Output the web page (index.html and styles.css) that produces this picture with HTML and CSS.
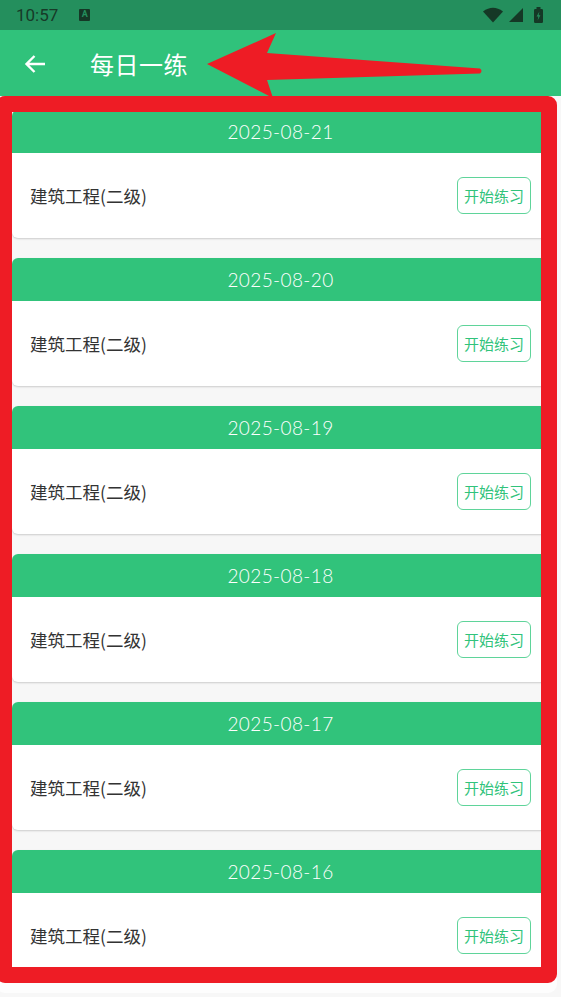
FILE: index.html
```html
<!DOCTYPE html>
<html lang="zh-CN">
<head>
    <meta charset="UTF-8">
    <meta name="viewport" content="width=device-width, initial-scale=1.0">
    <title>每日一练</title>
    <link rel="stylesheet" href="styles.css">
</head>
<body>
    <div class="screen">
        <!-- 状态栏 -->
        <div class="status-bar">
            <span class="time">10:57</span>
            <span class="app-badge">A</span>
            <span class="status-icons">
                <svg width="20" height="16" viewBox="0 0 20 16"><path d="M0 4.5 Q10 -3 20 4.5 L10 15.5 Z" fill="#153826"/></svg>
                <svg width="14" height="14" viewBox="0 0 14 14"><path d="M14 0 L14 14 L0 14 Z" fill="#153826"/></svg>
                <svg width="9" height="16" viewBox="0 0 9 16"><rect x="0" y="2" width="9" height="14" rx="1.2" fill="#153826"/><rect x="2.5" y="0" width="4" height="2.5" fill="#153826"/><path d="M5.4 4.5 L2.6 9.6 L4.4 9.6 L3.6 13.5 L6.4 8.2 L4.6 8.2 Z" fill="#248f5d"/></svg>
            </span>
        </div>

        <!-- 标题栏 -->
        <div class="app-bar">
            <svg class="back" width="22" height="20" viewBox="0 0 22 20"><path d="M21 10 H2.5 M10.5 2 L2.5 10 L10.5 18" fill="none" stroke="#fff" stroke-width="2.4"/></svg>
            <span class="title">每日一练</span>
        </div>

        <!-- 练习列表 -->
        <div class="list" id="list"></div>

        <!-- 标注 -->
        <div class="mark-box"></div>
        <svg class="mark-arrow" width="561" height="110" viewBox="0 0 561 110">
            <path d="M207 64 L276 33 L267 53 L480 68.5 Q483 71 480 73.5 L267 80 L273 98 Z" fill="#ee1c25"/>
        </svg>
    </div>

    <script>
        // 日期列表
        const dates = [
            "2025-08-21", "2025-08-20", "2025-08-19",
            "2025-08-18", "2025-08-17", "2025-08-16",
        ];

        const list = document.getElementById('list');
        dates.forEach(date => {
            list.innerHTML += `
                <div class="card">
                    <div class="card-head">${date}</div>
                    <div class="card-body">
                        <span class="subject">建筑工程(二级)</span>
                        <button class="start">开始练习</button>
                    </div>
                </div>
            `;
        });
    </script>
</body>
</html>
```

FILE: styles.css
```css
body {
    margin: 0;
    background: #f7f7f7;
    font-family: "Noto Sans CJK SC", "Noto Sans", sans-serif;
}
.screen {
    position: relative;
    width: 561px;
    height: 997px;
    overflow: hidden;
    background: #f7f7f7;
}
.status-bar {
    height: 30px;
    background: #248f5d;
    display: flex;
    align-items: center;
    padding: 0 18px 0 16px;
    color: #173a28;
}
.time {
    font-family: Roboto, sans-serif;
    font-size: 17px;
}
.app-badge {
    margin-left: 21px;
    width: 11px;
    height: 12px;
    background: #153826;
    color: #248f5d;
    font-family: Roboto, sans-serif;
    font-size: 9px;
    font-weight: bold;
    line-height: 11px;
    text-align: center;
    border-radius: 1px;
}
.status-icons {
    margin-left: auto;
    display: flex;
    align-items: center;
    gap: 6px;
}
.status-icons svg:last-child {
    margin-left: 5px;
}
.app-bar {
    height: 66px;
    background: #30c27b;
    display: flex;
    align-items: center;
    padding-left: 24px;
    color: #fff;
}
.back {
    margin-top: 2px;
}
.title {
    margin-left: 44px;
    font-size: 24px;
    letter-spacing: 0.5px;
}
.list {
    padding: 14px 12px 0;
}
.card {
    background: #fff;
    border-radius: 6px;
    margin-bottom: 20px;
    box-shadow: 0 1px 2px rgba(0, 0, 0, 0.18);
    overflow: hidden;
}
.card-head {
    height: 43px;
    background: #31c37b;
    color: #fff;
    font-family: Lato, "Noto Sans", sans-serif;
    font-weight: 300;
    font-size: 19px;
    letter-spacing: 0.4px;
    display: flex;
    align-items: center;
    justify-content: center;
}
.card-body {
    height: 85px;
    display: flex;
    align-items: center;
    justify-content: space-between;
    padding: 0 18px;
}
.subject {
    font-size: 17.5px;
    color: #333;
}
.start {
    font-family: "Noto Sans CJK SC", sans-serif;
    font-size: 15px;
    color: #31c37b;
    background: #fff;
    border: 1px solid #5fd49a;
    border-radius: 6px;
    height: 37px;
    padding: 0 6px;
}
.mark-box {
    position: absolute;
    left: -4px;
    top: 96px;
    width: 561px;
    height: 887px;
    box-sizing: border-box;
    border: 16px solid #ee1c25;
    border-radius: 9px;
    box-shadow: 0 10px 0 #fdfdfd;
}
.mark-arrow {
    position: absolute;
    left: 0;
    top: 0;
}
```
